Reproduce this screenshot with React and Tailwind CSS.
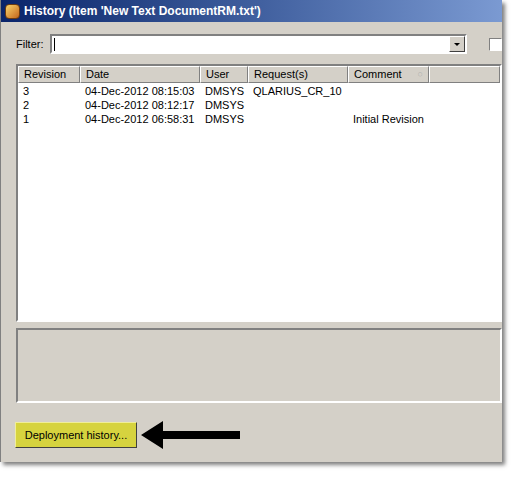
import React from 'react';

const cols = [
  { name: 'Revision', w: 'w-[62px]' },
  { name: 'Date', w: 'w-[120px]' },
  { name: 'User', w: 'w-[48px]' },
  { name: 'Request(s)', w: 'w-[100px]' },
  { name: 'Comment', w: 'w-[81px]' },
];

const rows = [
  ['3', '04-Dec-2012 08:15:03', 'DMSYS', 'QLARIUS_CR_10', ''],
  ['2', '04-Dec-2012 08:12:17', 'DMSYS', '', ''],
  ['1', '04-Dec-2012 06:58:31', 'DMSYS', '', 'Initial Revision'],
];

export default function App() {
  return (
    <div className="w-[516px] h-[488px] bg-white overflow-hidden" style={{ fontFamily: '"Liberation Sans", Arial, sans-serif' }}>
      <div className="w-[502px] h-[462px] bg-[#d4d0c8] flex flex-col shadow-[3px_3px_4px_rgba(0,0,0,0.5)] border-l border-[#808080]">
        {/* title bar */}
        <div className="h-[22px] shrink-0 flex items-center gap-1 px-1 bg-gradient-to-r from-[#0a246a] to-[#7b9ad2]">
          <div className="w-[15px] h-[15px] rounded-sm bg-gradient-to-br from-[#f7d36a] to-[#c2661a] border border-[#6b3a10]" />
          <span className="text-white text-[12px] font-bold">History (Item 'New Text DocumentRM.txt')</span>
        </div>
        {/* filter */}
        <div className="flex items-center mt-[12px] pl-[15px] h-[20px]">
          <span className="text-[11px] text-black mr-[6px]">Filter:</span>
          <div className="w-[419px] h-[20px] bg-white border-2 border-t-[#808080] border-l-[#808080] border-b-white border-r-white flex items-center justify-between">
            <span className="ml-[2px] w-px h-[13px] bg-black" />
            <div className="w-[16px] h-[16px] bg-[#d4d0c8] border border-t-white border-l-white border-b-[#404040] border-r-[#404040] flex items-center justify-center">
              <div className="w-0 h-0 border-l-[3px] border-r-[3px] border-t-[3px] border-l-transparent border-r-transparent border-t-black" />
            </div>
          </div>
          <div className="ml-[22px] w-[13px] h-[13px] bg-white border border-t-[#808080] border-l-[#808080] border-b-white border-r-white" />
        </div>
        {/* list */}
        <div className="mt-[10px] ml-[15px] h-[258px] bg-white border-2 border-t-[#808080] border-l-[#808080] border-b-white border-r-white">
          <div className="flex h-[17px] bg-[#d4d0c8]">
            {cols.map((c) => (
              <div key={c.name} className={`${c.w} shrink-0 flex items-center px-[5px] text-[11px] text-black border border-t-white border-l-white border-b-[#808080] border-r-[#808080]`}>
                {c.name}
                {c.name === 'Comment' && <span className="ml-auto text-[9px] text-[#b0b0b0]">○</span>}
              </div>
            ))}
            <div className="flex-1 border border-t-white border-l-white border-b-[#808080] border-r-[#808080]" />
          </div>
          <div className="pt-[1px]">
            {rows.map((r) => (
              <div key={r[0]} className="flex h-[14px] items-center text-[11px] text-black">
                {r.map((v, i) => (
                  <div key={i} className={`${cols[i].w} shrink-0 px-[5px] whitespace-nowrap`}>{v}</div>
                ))}
              </div>
            ))}
          </div>
        </div>
        {/* details panel */}
        <div className="mt-[6px] ml-[15px] h-[75px] border-2 border-t-[#808080] border-l-[#808080] border-b-white border-r-white" />
        {/* button */}
        <div className="flex items-center mt-[18px] ml-[14px]">
          <div className="w-[122px] h-[26px] bg-[#d6d33f] border border-t-[#f0ee9a] border-l-[#f0ee9a] border-b-[#404040] border-r-[#404040] flex items-center justify-center text-[11px] text-black">
            Deployment history...
          </div>
          <svg width="100" height="28" viewBox="0 0 100 28" className="ml-[4px]">
            <polygon points="0,14 22,0 22,10 99,10 99,18 22,18 22,28" fill="#000" />
          </svg>
        </div>
      </div>
    </div>
  );
}
